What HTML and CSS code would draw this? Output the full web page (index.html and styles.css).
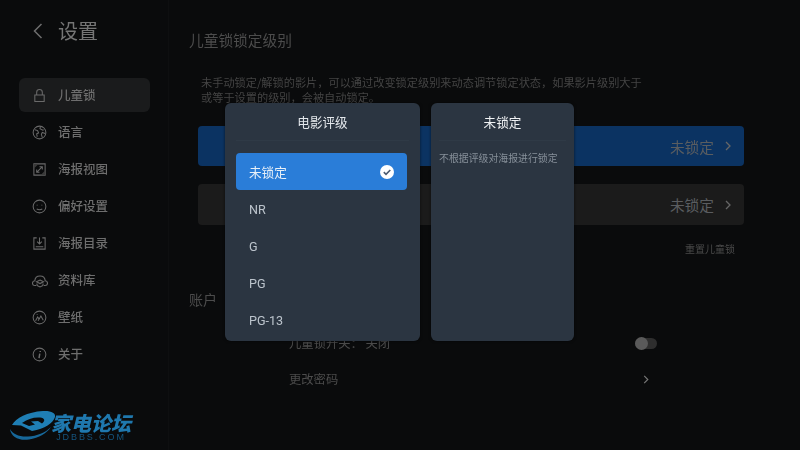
FILE: index.html
```html
<!DOCTYPE html>
<html lang="zh">
<head>
<meta charset="utf-8">
<title>设置</title>
<link rel="stylesheet" href="styles.css">
</head>
<body>
<div class="app">
  <aside class="sidebar">
    <header class="side-head">
      <svg class="back" viewBox="0 0 10 16"><path d="M8.500 1 1.500 8l7 7"/></svg>
      <span class="side-title">设置</span>
    </header>
    <nav class="nav">
      <div class="nav-item active">
        <svg class="ico" viewBox="0 0 16 16"><path d="M3 7.500h10v7H3zM5 7.500V4.500a3 3 0 0 1 6 0v3"/></svg><span>儿童锁</span>
      </div>
      <div class="nav-item">
        <svg class="ico" viewBox="0 0 16 16"><circle cx="8" cy="8" r="6.800"/><path d="M3 5l3 1 1 2.500-2 1 .5 3M9 1.500 8.500 4l3 1.500 1-.5M14 9l-3-1-1 2 1 3.500"/></svg><span>语言</span>
      </div>
      <div class="nav-item">
        <svg class="ico" viewBox="0 0 16 16"><path d="M2 2h12v12H2zM5 11l6-6M8 5h3v3M5 8v3h3"/><path class="fill" d="M9 14l5-5v5zM2 2h5L2 7z"/></svg><span>海报视图</span>
      </div>
      <div class="nav-item">
        <svg class="ico" viewBox="0 0 16 16"><circle cx="8" cy="8" r="6.800"/><path d="M5 10.500c1.500 1.300 4.500 1.300 6 0M5.500 6.200v.6M10.500 6.200v.6"/></svg><span>偏好设置</span>
      </div>
      <div class="nav-item">
        <svg class="ico" viewBox="0 0 16 16"><path d="M5 2H2v12h12V2h-3M8 1.500v7M5.500 6 8 8.500 10.500 6M4 11.500h8"/></svg><span>海报目录</span>
      </div>
      <div class="nav-item">
        <svg class="ico wide" viewBox="0 0 16 16"><path d="M4 12.500H2.800C1.500 12.500.500 11.500.500 10.200S1.500 8 2.800 7.800C3 5 5.200 3 8 3s5 2 5.200 4.800c1.300.2 2.300 1.100 2.300 2.400s-1 2.300-2.300 2.300H12"/><path d="M8 7l3.500 1.800L8 10.600 4.500 8.800zM5 10.500v2l3 1.500 3-1.500v-2"/></svg><span>资料库</span>
      </div>
      <div class="nav-item">
        <svg class="ico" viewBox="0 0 16 16"><circle cx="8" cy="8" r="6.800"/><path d="M3.800 11.500 6 7.500l1.500 2M6.500 11.500 9.500 6.500l2.500 4.500M5.500 4.300v.8"/></svg><span>壁纸</span>
      </div>
      <div class="nav-item">
        <svg class="ico" viewBox="0 0 16 16"><circle cx="8" cy="8" r="6.800"/><path class="thick" d="M8.800 4.300v1M8.300 7 7.500 11.800"/></svg><span>关于</span>
      </div>
    </nav>
  </aside>

  <main class="main">
    <h2 class="heading">儿童锁锁定级别</h2>
    <p class="desc">未手动锁定/解锁的影片，可以通过改变锁定级别来动态调节锁定状态，如果影片级别大于<br>或等于设置的级别，会被自动锁定。</p>
    <div class="row row-blue">
      <span class="row-value">未锁定</span>
      <svg class="chev" viewBox="0 0 6 10"><path d="M1 1l4 4-4 4"/></svg>
    </div>
    <div class="row row-gray">
      <span class="row-value">未锁定</span>
      <svg class="chev" viewBox="0 0 6 10"><path d="M1 1l4 4-4 4"/></svg>
    </div>
    <div class="reset">重置儿童锁</div>
    <h2 class="heading account">账户</h2>
    <div class="acc-row switch-row">
      <span>儿童锁开关： 关闭</span>
      <span class="toggle"><span class="knob"></span></span>
    </div>
    <div class="acc-row pwd-row">
      <span>更改密码</span>
      <svg class="chev small" viewBox="0 0 6 10"><path d="M1 1l4 4-4 4"/></svg>
    </div>
  </main>
</div>

<div class="dialog">
  <section class="panel panel-list">
    <h3 class="panel-title">电影评级</h3>
    <ul class="options">
      <li class="option selected">未锁定
        <svg class="check" viewBox="0 0 14 14"><circle cx="7" cy="7" r="7" fill="#fff"/><path d="M3.800 7.200 6 9.300l4.300-4.300" fill="none" stroke="#4a5a70" stroke-width="1.600"/></svg>
      </li>
      <li class="option">NR</li>
      <li class="option">G</li>
      <li class="option">PG</li>
      <li class="option">PG-13</li>
    </ul>
  </section>
  <section class="panel panel-info">
    <h3 class="panel-title">未锁定</h3>
    <p class="info">不根据评级对海报进行锁定</p>
  </section>
</div>

<div class="logo">
  <svg class="logo-mark" viewBox="0 0 50 32">
    <path fill-rule="evenodd" d="M5 15C9 8 20 2 36 1c8-.5 13 2 12 6-2 6-10 12-23 14L14 15.500zM15 13c5-4 12-6 18-5.500 5 .5 5.500 3.500 2 6l-4-2.500-7 .5 4 3-6 1.500z" fill="#1f7fb5"/>
    <path d="M3 19c1 8 9 12 19 10.500C32 28 40 23 44 17c-6 6-14 9-23 9.500C12 27 6 24 3 19z" fill="#17689a"/>
  </svg>
  <div class="logo-text">
    <span class="logo-cn">家电论坛</span>
    <span class="logo-en">JDBBS.COM</span>
  </div>
</div>
</body>
</html>
```
FILE: styles.css
```css
* { box-sizing: border-box; margin: 0; padding: 0; }
html, body { width: 800px; height: 450px; overflow: hidden; background: #0a0b0c; }
body { font-family: "Noto Sans CJK SC", "Roboto", sans-serif; position: relative; }

.app { display: flex; width: 800px; height: 450px; filter: blur(.35px); }

.sidebar { width: 169px; flex: none; padding: 0 18px 0 19px; border-right: 1px solid #0e0f10; }
.side-head { height: 78px; padding: 16px 0 0 14px; display: flex; align-items: flex-start; }
.back { width: 10px; height: 16px; margin-top: 7px; fill: none; stroke: #6e6e6e; stroke-width: 1.500; }
.side-title { margin-left: 15px; font-size: 20px; line-height: 30px; color: #757575; }

.nav { display: flex; flex-direction: column; gap: 3.150px; }
.nav-item { height: 34px; display: flex; align-items: center; padding-left: 13px; border-radius: 6px; font-size: 12.500px; font-weight: 500; color: #6e6e6e; }
.nav-item.active { background: #1a1b1c; }
.nav-item span { margin: 0 0 2px 11px; }
.ico { width: 15px; height: 15px; flex: none; fill: none; stroke: #6a6a6a; stroke-width: 1.100; }
.ico .fill { fill: #3a3a3a; stroke: none; }
.ico .thick { stroke-width: 1.600; }
.ico.wide { width: 16px; height: 16px; margin: 0 -1px 0 0; }

.main { flex: 1; padding: 30px 56px 0 20px; display: flex; flex-direction: column; }
.heading { font-size: 14.700px; font-weight: 400; line-height: 20px; color: #4c4c4c; }
.desc { margin: 25px 0 0 12px; font-size: 11.200px; line-height: 15px; color: #444; white-space: nowrap; }
.row { margin: 21px 0 0 9px; height: 40px; display: flex; align-items: center; justify-content: flex-end; padding-right: 13px; border-radius: 4px; }
.row-blue { background: #0b3362; }
.row-gray { margin-top: 18px; height: 41px; background: #1b1b1b; }
.row-value { font-size: 14.700px; color: #5a5d60; margin-right: 11px; }
.chev { width: 6px; height: 10px; fill: none; stroke: #666; stroke-width: 1.300; }
.reset { margin: 17px 9px 0 0; text-align: right; font-size: 10px; line-height: 14px; color: #4a4a4a; }
.account { margin-top: 33px; font-size: 14px; }
.acc-row { display: flex; align-items: center; justify-content: space-between; margin-left: 100px; font-size: 12.300px; color: #4c4c4c; }
.switch-row { margin-top: 24px; height: 20px; padding-right: 87px; }
.pwd-row { margin-top: 16px; height: 20px; padding-right: 95px; }
.chev.small { width: 6px; height: 9px; stroke: #777; }
.toggle { width: 22px; height: 11px; position: relative; border-radius: 6px; background: #2e2e2e; }
.knob { position: absolute; left: 0; top: -1px; width: 13px; height: 13px; border-radius: 50%; background: #5a5a5a; }

.dialog { position: absolute; left: 225px; top: 103px; display: flex; gap: 11px; filter: blur(.3px); }
.panel { height: 238px; background: #2b3541; border-radius: 6px; box-shadow: 0 0 3px rgba(0, 0, 0, .6); }
.panel-list { width: 195px; padding: 0 13px 0 11px; }
.panel-list .panel-title { margin-right: -2px; }
.panel-info { width: 143px; padding: 0 8px; }
.panel-title { height: 38px; font-size: 12.600px; font-weight: 400; line-height: 38px; text-align: center; color: #e4e8ec; border-bottom: 1px solid #2f3a46; }
.panel-info .panel-title { color: #f0f2f4; }
.options { list-style: none; margin-top: 12px; }
.option { height: 37.200px; display: flex; align-items: center; justify-content: space-between; padding: 1px 13px 0; font-family: "Roboto", "Noto Sans CJK SC", sans-serif; font-size: 12.600px; color: #bcc4cc; }
.option.selected { padding-top: 0; font-family: "Noto Sans CJK SC", sans-serif; background: #2a7dd8; border-radius: 4px; color: #e8f0f8; }
.check { width: 14px; height: 14px; }
.info { margin-top: 9px; font-size: 9.900px; line-height: 16px; color: #87909a; white-space: nowrap; }

.logo { position: absolute; left: 7px; top: 410px; display: flex; filter: blur(.4px); }
.logo-mark { width: 50px; height: 32px; flex: none; }
.logo-text { display: flex; flex-direction: column; align-items: center; margin-left: -6px; padding-top: 3px; }
.logo-cn { font-size: 20px; font-weight: 900; font-style: italic; line-height: 20px; color: #1f78ae; white-space: nowrap; }
.logo-en { font-family: "Liberation Sans", sans-serif; font-size: 9px; line-height: 9px; letter-spacing: 1.900px; color: #15557f; }
```
